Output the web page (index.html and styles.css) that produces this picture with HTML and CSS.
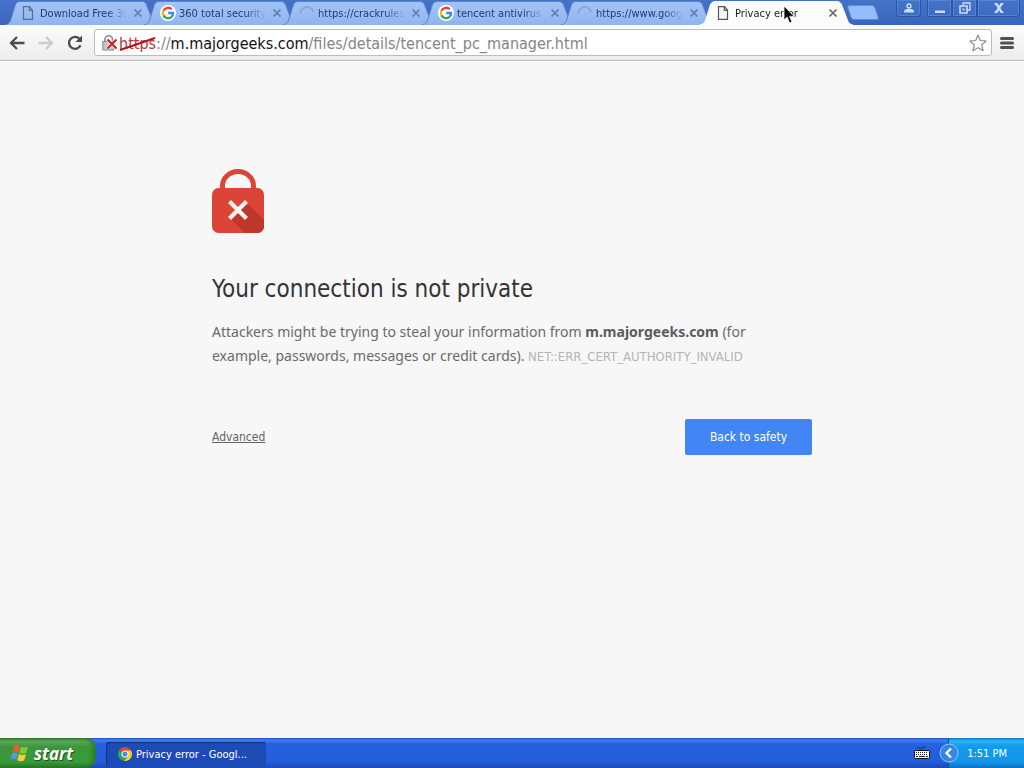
FILE: index.html
```html
<!DOCTYPE html>
<html lang="en">
<head>
<meta charset="utf-8">
<title>Privacy error</title>
<link rel="stylesheet" href="styles.css">
</head>
<body>
<svg class="defs" aria-hidden="true">
  <defs>
    <linearGradient id="tabfill" x1="0" y1="0" x2="0" y2="1"><stop offset="0" stop-color="#a3c4f8"/><stop offset="1" stop-color="#8fb5ee"/></linearGradient>
    <symbol id="tab" viewBox="0 0 153 24"><path d="M0 24C4 23 5 21 6 18L10 5C11 2 12 .5 16 .5H136C140 .5 141 2 142 5L147 18C148 21 149 23 153 24"/></symbol>
    <symbol id="page" viewBox="0 0 12 14"><path d="M1.500 .700H7.500L10.500 4V13.300H1.500ZM7.300 .900V4.300H10.500" fill="none" stroke="currentColor" stroke-width="1.200"/></symbol>
    <symbol id="google" viewBox="0 0 16 16"><circle cx="8" cy="8" r="8" fill="#fff"/><g fill="none" stroke-width="2.300"><path d="M11.800 4.300A5.200 5.200 0 0 0 3.400 5.700" stroke="#e94335"/><path d="M3.400 5.700A5.200 5.200 0 0 0 3.400 10.400" stroke="#f5b90b"/><path d="M3.400 10.400A5.200 5.200 0 0 0 11.600 11.800" stroke="#34a853"/><path d="M11.600 11.800A5 5 0 0 0 13.100 8H8.200" stroke="#4285f4"/></g></symbol>
    <symbol id="spin" viewBox="0 0 16 16"><path d="M1.500 9A6.500 6.500 0 0 1 14.300 7" fill="none" stroke="#8ba8d4" stroke-width="2"/></symbol>
    <symbol id="close" viewBox="0 0 10 10"><path d="M1.500 1.500L8.500 8.500M8.500 1.500L1.500 8.500" stroke="currentColor" stroke-width="1.700"/></symbol>
  </defs>
</svg>
<header class="tabstrip">
  <nav class="tabs" aria-label="Tabs">
    <div class="tab"><svg class="shape"><use href="#tab"/></svg><svg class="favicon"><use href="#page" x="1" y="1" width="12" height="14"/></svg><span class="label">Download Free 360</span><button class="close" aria-label="Close tab"><svg><use href="#close"/></svg></button></div>
    <div class="tab"><svg class="shape"><use href="#tab"/></svg><svg class="favicon"><use href="#google"/></svg><span class="label">360 total security</span><button class="close" aria-label="Close tab"><svg><use href="#close"/></svg></button></div>
    <div class="tab"><svg class="shape"><use href="#tab"/></svg><svg class="favicon"><use href="#spin"/></svg><span class="label">https://crackrules</span><button class="close" aria-label="Close tab"><svg><use href="#close"/></svg></button></div>
    <div class="tab"><svg class="shape"><use href="#tab"/></svg><svg class="favicon"><use href="#google"/></svg><span class="label">tencent antivirus</span><button class="close" aria-label="Close tab"><svg><use href="#close"/></svg></button></div>
    <div class="tab"><svg class="shape"><use href="#tab"/></svg><svg class="favicon"><use href="#spin"/></svg><span class="label">https://www.google</span><button class="close" aria-label="Close tab"><svg><use href="#close"/></svg></button></div>
    <div class="tab active"><svg class="shape"><use href="#tab"/></svg><svg class="favicon"><use href="#page" x="1" y="1" width="12" height="14"/></svg><span class="label">Privacy error</span><button class="close" aria-label="Close tab"><svg><use href="#close"/></svg></button></div>
    <button class="newtab" aria-label="New tab"><svg viewBox="0 0 32 15"><path d="M3 .5H24C26 .5 27 1 28 3L31 12C31.500 14 31 14.500 29 14.500H8C6 14.500 5 14 4 12L1 3C.5 1 1 .5 3 .5Z" fill="#94befa" stroke="#5d8edb"/></svg></button>
  </nav>
  <div class="controls">
    <button class="ctl user" aria-label="User"><svg viewBox="0 0 12 12"><circle cx="6" cy="4" r="1.900" fill="none" stroke="#cbdefb" stroke-width="1.500"/><path d="M1 10.500V9C2 7 4 7 6 7S10 7 11 9V10.500Z"/></svg></button>
    <div class="group">
      <button class="ctl" aria-label="Minimize"><svg viewBox="0 0 12 12"><path d="M1 8.500H11V11H1Z"/></svg></button>
      <button class="ctl" aria-label="Restore"><svg viewBox="0 0 12 12"><path d="M4 1H11V8H4Z" fill="none" stroke="#cbdefb" stroke-width="1.300"/><path d="M1 4H8V11H1Z" fill="#3e6fc4" stroke="#cbdefb" stroke-width="1.600"/><path d="M3.500 6.500H5.500V8.500H3.500Z"/></svg></button>
      <button class="ctl wide" aria-label="Close"><svg viewBox="0 0 12 12"><path d="M1.500 1H4.500L6 4L7.500 1H10.500V2.500H9.700L7.300 6L9.700 9.500H10.500V11H7.500L6 8L4.500 11H1.500V9.500H2.300L4.700 6L2.300 2.500H1.500Z"/></svg></button>
    </div>
  </div>
</header>
<div class="toolbar">
  <button class="tool" aria-label="Back"><svg viewBox="0 0 16 16"><path d="M15.500 8H2M8 2L2 8L8 14" fill="none" stroke="#4c4c4c" stroke-width="2.300"/></svg></button>
  <button class="tool" aria-label="Forward"><svg viewBox="0 0 16 16"><path d="M.5 8H14M8 2L14 8L8 14" fill="none" stroke="#cdcdcd" stroke-width="2.300"/></svg></button>
  <button class="tool" aria-label="Reload"><svg viewBox="0 0 16 16"><path d="M13.500 10.300A6 6 0 1 1 12.500 3.800" fill="none" stroke="#4c4c4c" stroke-width="2.300"/><path d="M15 .5V7H8.500Z" fill="#4c4c4c"/></svg></button>
  <div class="omnibox">
    <svg class="badlock" viewBox="0 0 16 16"><path d="M3 7V4.500A3.700 3.700 0 0 1 10.500 4.500V7" fill="none" stroke="#909090" stroke-width="1.700"/><path d="M.8 6.500H12V15H.8Z" fill="#c5c5c5" stroke="#8a8a8a"/><path d="M5.500 4.500L14.500 13.500M14.500 4.500L5.500 13.500" stroke="#fff" stroke-width="3.500"/><path d="M5.500 4.500L14.500 13.500M14.500 4.500L5.500 13.500" stroke="#c91a24" stroke-width="2"/></svg>
    <div class="url" role="textbox" aria-label="Address"><span class="scheme">https<svg viewBox="0 0 37 14" preserveAspectRatio="none"><path d="M1 13L36 1" stroke="#b5121c" stroke-width="2"/></svg></span>://<span class="host">m.majorgeeks.com</span>/files/details/tencent_pc_manager.html</div>
    <button class="star" aria-label="Bookmark"><svg viewBox="0 0 18 18"><path d="M9 1L11.300 6.500L17.200 7L12.700 10.900L14.100 16.700L9 13.600L3.900 16.700L5.300 10.900L.8 7L6.700 6.500Z" fill="#fff" stroke="#868686" stroke-width="1.100" stroke-linejoin="round"/></svg></button>
  </div>
  <button class="menu" aria-label="Menu"><svg viewBox="0 0 14 14"><path d="M1.500 2.500H12.500M1.500 7H12.500M1.500 11.500H12.500" stroke="#505050" stroke-width="3" stroke-linecap="round"/></svg></button>
</div>
<main class="page">
  <section class="error">
    <svg class="lock" viewBox="0 0 52 64"><path d="M10.500 23V17A15.500 14.500 0 0 1 41.500 17V23" fill="none" stroke="#db4437" stroke-width="5"/><rect y="19" width="52" height="45" rx="6.500" fill="#db4437"/><path d="M34 33L52 51V57.500A6.500 6.500 0 0 1 45.500 64H33L18 49Z" fill="#bd372d"/><path d="M17.500 32.500L34.500 49.500M34.500 32.500L17.500 49.500" stroke="#fcf6ef" stroke-width="4.200"/></svg>
    <h1>Your connection is not private</h1>
    <p>Attackers might be trying to steal your information from <strong>m.majorgeeks.com</strong> (for example, passwords, messages or credit cards). <span class="code">NET::ERR_CERT_AUTHORITY_INVALID</span></p>
    <div class="actions"><a href="#">Advanced</a><button class="primary">Back to safety</button></div>
  </section>
</main>
<footer class="taskbar">
  <button class="start"><svg viewBox="0 0 20 18"><path d="M4 2C6 .5 8 .8 10 2L8.300 8.300C6.500 7.300 4.500 7.200 2.300 8.500Z" fill="#ee5a2b"/><path d="M11 2.500C13 3.800 15.500 3.800 18 2.500L16.300 8.700C14 10 11.500 10 9.300 8.700Z" fill="#7fc93e"/><path d="M2 9.500C4 8.300 6 8.300 8 9.500L6.300 15.500C4.500 14.500 2.500 14.500 .3 15.700Z" fill="#5a91f2"/><path d="M9 10C11 11.200 13.500 11.200 16 10L14.300 16.200C12 17.500 9.500 17.500 7.300 16.200Z" fill="#f8cf30"/></svg><span>start</span></button>
  <button class="task"><svg viewBox="0 0 16 16"><path d="M8 8L1.100 4A8 8 0 0 1 14.900 4Z" fill="#e34436"/><path d="M8 8L1.100 4A8 8 0 0 0 7 16L11.500 10Z" fill="#35a653"/><path d="M8 4H14.900A8 8 0 0 1 7 16L11.500 10Z" fill="#fbca2e"/><circle cx="8" cy="8" r="4" fill="#fff"/><circle cx="8" cy="8" r="2.900" fill="#4a8bf0"/></svg><span>Privacy error - Googl...</span></button>
  <svg class="keyboard" viewBox="0 0 16 14"><path d="M3 2C5 0 6 4 8 2S11 1 12 2" fill="none" stroke="#10245e"/><rect x=".5" y="4.500" width="15" height="8" rx="1" fill="#f4f4f4" stroke="#111"/><path d="M2 6.500H14M2 8.500H14" stroke="#222" stroke-dasharray="1 1"/><path d="M2 10.500H4M5 10.500H11M12 10.500H14" stroke="#222"/></svg>
  <div class="tray"><button class="expand" aria-label="Show hidden icons"><svg viewBox="0 0 20 20"><circle cx="10" cy="10" r="9" fill="#3488e4" stroke="#91c6f7"/><path d="M12 5.500L7.500 10L12 14.500" fill="none" stroke="#fff" stroke-width="2.300"/></svg></button><time>1:51 PM</time></div>
</footer>
<svg class="cursor" viewBox="0 0 12 20"><path d="M1 1V15L4.200 12L6.500 18L9 17L6.600 11.300H11Z" fill="#000" stroke="#fff" stroke-width=".8"/></svg>
</body>
</html>
```
FILE: styles.css
```css
* { box-sizing: border-box; }
body {
  margin: 0;
  min-height: 100vh;
  display: flex;
  flex-direction: column;
  font-family: "DejaVu Sans Condensed", "DejaVu Sans", sans-serif;
  font-size: 11px;
  background: #f7f7f7;
}
button { border: 0; padding: 0; margin: 0; background: none; font: inherit; color: inherit; }
svg { display: block; }
.defs { position: absolute; width: 0; height: 0; }

.tabstrip {
  display: flex;
  justify-content: space-between;
  height: 25px;
  padding: 0 4px 0 5px;
  background: linear-gradient(#4573c8, #3966bd);
}
.tabs { display: flex; align-items: flex-end; }
.tab {
  position: relative;
  display: flex;
  align-items: center;
  width: 153px;
  height: 24px;
  margin-right: -14px;
  padding: 0 15px 0 16px;
  color: #1f3d6b;
}
.shape { position: absolute; inset: 0; width: 100%; height: 100%; fill: url(#tabfill); stroke: #5b84c4; }
.tab.active { z-index: 1; color: #222; }
.tab.active .shape { fill: #fcfcfc; stroke: #fcfcfc; }
.favicon { position: relative; width: 16px; height: 16px; flex: none; color: #56708f; }
.active .favicon { color: #555; }
.label {
  position: relative;
  flex: 1;
  min-width: 0;
  margin: 0 6px 0 3px;
  overflow: hidden;
  white-space: nowrap;
  -webkit-mask-image: linear-gradient(to left, transparent, #000 20px);
  mask-image: linear-gradient(to left, transparent, #000 20px);
}
.close { position: relative; color: #5c7fb2; }
.active .close { color: #666; }
.close svg { width: 10px; height: 10px; }
.newtab { align-self: center; margin-left: 8px; }
.newtab svg { width: 32px; height: 15px; }
.controls { display: flex; align-items: flex-start; gap: 6px; }
.group { display: flex; }
.ctl {
  display: flex;
  align-items: center;
  justify-content: center;
  width: 25px;
  height: 17px;
  border: 1px solid #2c56a5;
  border-top: 0;
  box-shadow: inset 0 0 0 1px #5383d4;
  fill: #cbdefb;
}
.ctl svg { width: 12px; height: 12px; }
.ctl.wide { width: 43px; border-radius: 0 0 4px 0; }
.ctl.user { border-radius: 0 0 4px 4px; }

.toolbar {
  display: flex;
  align-items: center;
  height: 36px;
  padding: 0 10px 0 9px;
  background: linear-gradient(#fcfcfc, #ececec);
  border-bottom: 1px solid #bdbdbd;
}
.tool { margin-right: 13px; }
.tool svg { width: 16px; height: 16px; }
.omnibox {
  display: flex;
  align-items: center;
  flex: 1;
  height: 27px;
  margin: 0 8px 0 -2px;
  padding: 0 4px 0 7px;
  background: #fff;
  border: 1px solid #bcbcbc;
  border-radius: 3px;
}
.badlock { width: 16px; height: 16px; margin-right: 1px; }
.url { flex: 1; padding-top: 1px; font-size: 16px; color: #858585; white-space: nowrap; }
.scheme { position: relative; color: #b5343a; }
.scheme svg { position: absolute; left: 0; top: 3px; width: 100%; height: 14px; }
.host { color: #111; }
.star svg { width: 18px; height: 18px; }
.menu svg { width: 14px; height: 14px; }

.page { flex: 1; }
.error { max-width: 600px; margin: 0 auto; padding-top: 108px; color: #6a6a6a; }
.lock { width: 52px; height: 64px; }
h1 { margin: 40px 0 15px; font-size: 24px; font-weight: 400; line-height: 32px; color: #333; }
p { margin: 0; padding-right: 40px; font-family: "Noto Sans", sans-serif; font-size: 14px; line-height: 24px; }
strong { color: #5c5c5c; }
.code { font-family: "DejaVu Sans Condensed", "DejaVu Sans", sans-serif; font-size: 13px; color: #b4b4b4; }
.actions { display: flex; align-items: center; justify-content: space-between; margin-top: 50px; font-size: 12px; }
.actions a { color: #646464; }
.primary { width: 127px; height: 36px; border-radius: 2px; background: #4285f4; color: #fff; }

.taskbar {
  display: flex;
  align-items: center;
  height: 30px;
  color: #fff;
  background: linear-gradient(#2050b8 0, #3a80f0 2px, #2760e0 6px, #245ddb 24px, #1c48b4 30px);
}
.start {
  display: flex;
  align-items: center;
  gap: 4px;
  width: 96px;
  height: 30px;
  padding-left: 10px;
  border-radius: 0 10px 10px 0;
  background: linear-gradient(#2c7a2c 0, #5dab55 3px, #3c963c 9px, #3a9a3a 24px, #277527 30px);
  box-shadow: inset -3px 0 4px #2a762a;
  font: italic bold 17px "Open Sans", "Noto Sans", sans-serif;
  text-shadow: 1px 1px 1px #1e4f1e;
}
.start svg { width: 20px; height: 18px; }
.task {
  display: flex;
  align-items: center;
  gap: 4px;
  width: 160px;
  height: 25px;
  margin: 2px auto 0 10px;
  padding-left: 12px;
  border-radius: 3px;
  background: #1c4bb6;
  box-shadow: inset 1px 1px 1px #12327f;
}
.task svg { width: 14px; height: 14px; }
.keyboard { width: 16px; height: 14px; margin-right: 18px; }
.tray {
  display: flex;
  align-items: center;
  gap: 8px;
  height: 30px;
  padding-right: 17px;
  border-left: 1px solid #0f4ba0;
  background: linear-gradient(#0f75c8 0, #2bb3f4 3px, #139aea 8px, #1496e8 24px, #0d6fc0 30px);
}
.expand { margin-left: -10px; }
.expand svg { width: 20px; height: 20px; }
.cursor { position: absolute; z-index: 2; left: 783px; top: 5px; width: 12px; height: 20px; }
```
